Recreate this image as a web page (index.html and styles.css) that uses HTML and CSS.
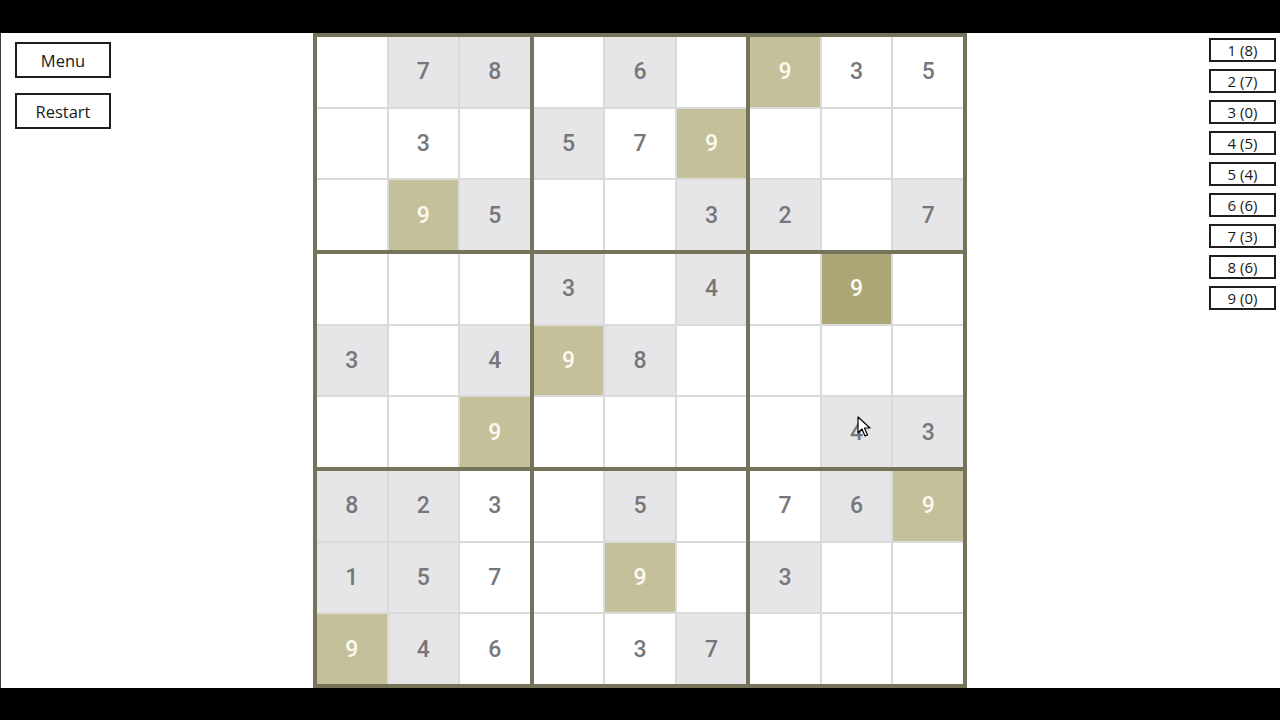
FILE: index.html
```html
<!DOCTYPE html>
<html lang="en">
<head>
<meta charset="utf-8">
<title>Sudoku</title>
<link rel="stylesheet" href="styles.css">
</head>
<body>
<div class="topbar"></div>
<main class="main">
  <aside class="left">
    <button class="btn">Menu</button>
    <button class="btn">Restart</button>
  </aside>
  <section class="board">
    <div class="block">
      <div class="cell"></div><div class="cell g">7</div><div class="cell g">8</div>
      <div class="cell"></div><div class="cell">3</div><div class="cell"></div>
      <div class="cell"></div><div class="cell o">9</div><div class="cell g">5</div>
    </div>
    <div class="block">
      <div class="cell"></div><div class="cell g">6</div><div class="cell"></div>
      <div class="cell g">5</div><div class="cell">7</div><div class="cell o">9</div>
      <div class="cell"></div><div class="cell"></div><div class="cell g">3</div>
    </div>
    <div class="block">
      <div class="cell o">9</div><div class="cell">3</div><div class="cell">5</div>
      <div class="cell"></div><div class="cell"></div><div class="cell"></div>
      <div class="cell g">2</div><div class="cell"></div><div class="cell g">7</div>
    </div>
    <div class="block">
      <div class="cell"></div><div class="cell"></div><div class="cell"></div>
      <div class="cell g">3</div><div class="cell"></div><div class="cell g">4</div>
      <div class="cell"></div><div class="cell"></div><div class="cell o">9</div>
    </div>
    <div class="block">
      <div class="cell g">3</div><div class="cell"></div><div class="cell g">4</div>
      <div class="cell o">9</div><div class="cell g">8</div><div class="cell"></div>
      <div class="cell"></div><div class="cell"></div><div class="cell"></div>
    </div>
    <div class="block">
      <div class="cell"></div><div class="cell sel">9</div><div class="cell"></div>
      <div class="cell"></div><div class="cell"></div><div class="cell"></div>
      <div class="cell"></div><div class="cell g">4</div><div class="cell g">3</div>
    </div>
    <div class="block">
      <div class="cell g">8</div><div class="cell g">2</div><div class="cell">3</div>
      <div class="cell g">1</div><div class="cell g">5</div><div class="cell">7</div>
      <div class="cell o">9</div><div class="cell g">4</div><div class="cell">6</div>
    </div>
    <div class="block">
      <div class="cell"></div><div class="cell g">5</div><div class="cell"></div>
      <div class="cell"></div><div class="cell o">9</div><div class="cell"></div>
      <div class="cell"></div><div class="cell">3</div><div class="cell g">7</div>
    </div>
    <div class="block">
      <div class="cell">7</div><div class="cell g">6</div><div class="cell o">9</div>
      <div class="cell g">3</div><div class="cell"></div><div class="cell"></div>
      <div class="cell"></div><div class="cell"></div><div class="cell"></div>
    </div>
    <svg class="cursor" width="14" height="22" viewBox="0 0 14 22">
      <path d="M1 1 L1 17 L5 13 L8 20 L10.5 19 L7.5 12 L13 12 Z" fill="#fff" stroke="#000" stroke-width="1.2" stroke-linejoin="round"/>
    </svg>
  </section>
  <aside class="right">
    <button class="num">1 (8)</button>
    <button class="num">2 (7)</button>
    <button class="num">3 (0)</button>
    <button class="num">4 (5)</button>
    <button class="num">5 (4)</button>
    <button class="num">6 (6)</button>
    <button class="num">7 (3)</button>
    <button class="num">8 (6)</button>
    <button class="num">9 (0)</button>
  </aside>
</main>
<div class="bottombar"></div>
</body>
</html>
```
FILE: styles.css
```css
* { box-sizing: border-box; }
html, body { margin: 0; padding: 0; }
body {
  width: 1280px;
  height: 720px;
  background: #000;
  display: flex;
  flex-direction: column;
  overflow: hidden;
  font-family: "Open Sans", "Liberation Sans", sans-serif;
}
.topbar { height: 33px; background: #000; }
.bottombar { flex: 1; background: #000; }
.main {
  height: 655px;
  background: #fff;
  display: flex;
  border-left: 1px solid #3a3a3a;
}
.left {
  width: 312px;
  padding: 9px 0 0 14px;
  display: flex;
  flex-direction: column;
  gap: 15px;
}
.btn {
  width: 96px;
  height: 36px;
  background: #fff;
  border: 2px solid #1e1e1e;
  font-family: "Open Sans", "Liberation Sans", sans-serif;
  font-size: 16.5px;
  color: #1a1a1a;
  padding: 0;
}
.board {
  position: relative;
  width: 654px;
  height: 655px;
  background: #75735a;
  padding: 4px;
  display: grid;
  grid-template-columns: repeat(3, 1fr);
  grid-template-rows: repeat(3, 1fr);
  gap: 4px;
}
.block {
  background: #dadada;
  display: grid;
  grid-template-columns: repeat(3, 1fr);
  grid-template-rows: repeat(3, 1fr);
  gap: 2px;
}
.cell {
  background: #fff;
  display: flex;
  align-items: center;
  justify-content: center;
  font-family: Roboto, "Liberation Sans", sans-serif;
  font-weight: 500;
  font-size: 23px;
  color: #77777a;
}
.cell.g { background: #e6e6e8; }
.cell.o { background: #c4c09a; color: #fbfaf0; }
.cell.sel { background: #aca677; color: #fbfaf0; }
.cursor {
  position: absolute;
  left: 544px;
  top: 383px;
}
.right {
  flex: 1;
  display: flex;
  flex-direction: column;
  align-items: flex-end;
  padding: 5px 4px 0 0;
  gap: 7px;
}
.num {
  width: 67px;
  height: 24px;
  background: #fff;
  border: 2px solid #1e1e1e;
  font-family: "Open Sans", "Liberation Sans", sans-serif;
  font-size: 15px;
  color: #1a1a1a;
  padding: 0;
  line-height: 20px;
}
```
